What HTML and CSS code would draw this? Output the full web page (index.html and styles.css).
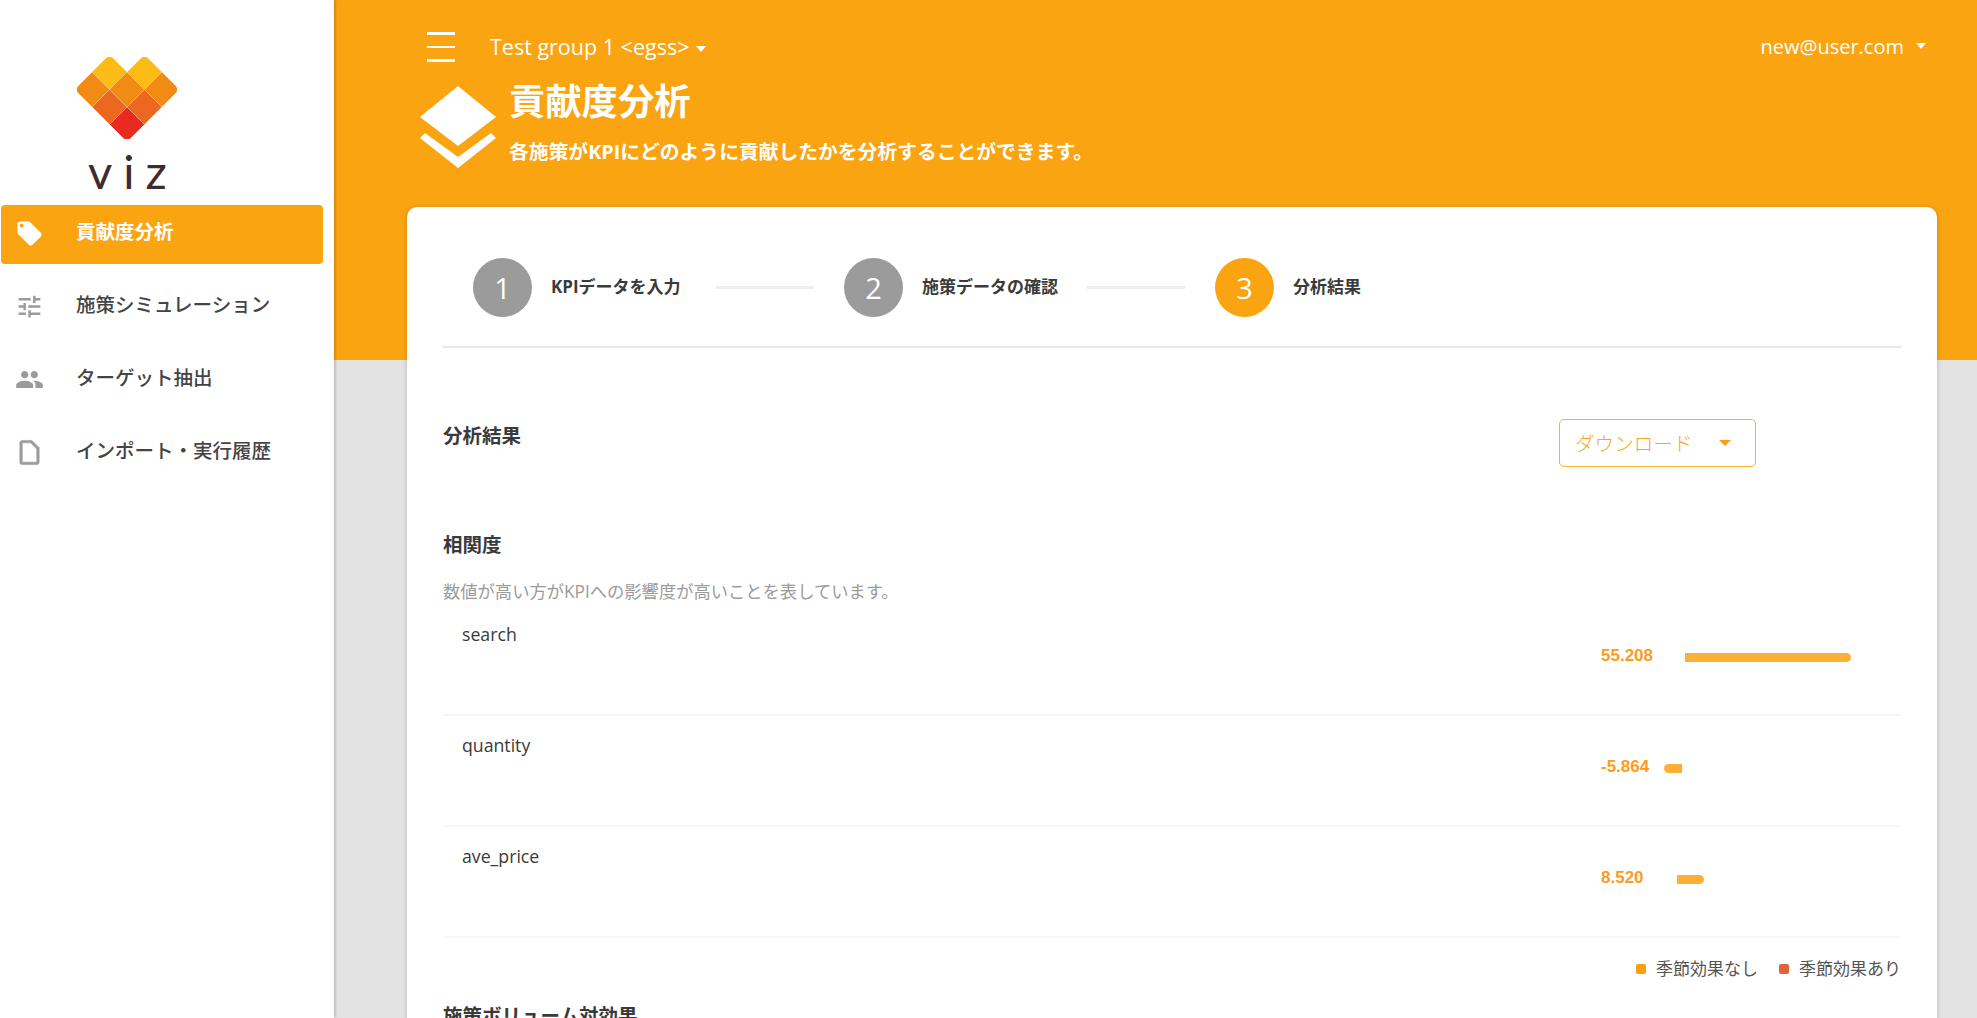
FILE: index.html
```html
<!DOCTYPE html>
<html lang="ja">
<head>
<meta charset="UTF-8">
<title>貢献度分析</title>
<link rel="stylesheet" href="styles.css">
</head>
<body>
<div class="app">
  <aside class="sidebar">
    <div class="logo">
      <svg class="logo-mark" width="100" height="82" viewBox="0 0 100 82">
        <defs>
          <clipPath id="heart">
            <path d="M28 2Q32.5-2.500 37 2L50 15 63 2Q67.500-2.500 72 2L98 28Q102.500 32.500 98 37L54.500 80.500Q50 85 45.500 80.500L2 37Q-2.500 32.500 2 28Z"/>
          </clipPath>
        </defs>
        <g clip-path="url(#heart)" stroke="#fbd98a" stroke-width=".4">
          <path fill="#fcbb15" d="M32.500-2.500 50 15 32.500 32.500 15 15Z"/>
          <path fill="#fcbb15" d="M67.500-2.500 85 15 67.500 32.500 50 15Z"/>
          <path fill="#f28b14" d="M15 15 32.500 32.500 15 50-2.500 32.500Z"/>
          <path fill="#f28b14" d="M50 15 67.500 32.500 50 50 32.500 32.500Z"/>
          <path fill="#f28b14" d="M85 15 102.500 32.500 85 50 67.500 32.500Z"/>
          <path fill="#ec6720" d="M32.500 32.500 50 50 32.500 67.500 15 50Z"/>
          <path fill="#ec6720" d="M67.500 32.500 85 50 67.500 67.500 50 50Z"/>
          <path fill="#e92a20" d="M50 50 67.500 67.500 50 85 32.500 67.500Z"/>
        </g>
      </svg>
      <div class="logo-text">viz</div>
    </div>
    <nav class="nav">
      <a class="nav-item active">
        <svg class="nav-icon" viewBox="0 0 24 24"><path d="M21.410 11.580l-9-9C12.050 2.220 11.550 2 11 2H4c-1.100 0-2 .9-2 2v7c0 .55.22 1.050.59 1.420l9 9c.36.36.86.58 1.410.58.55 0 1.050-.22 1.410-.59l7-7c.37-.36.59-.86.59-1.410 0-.55-.23-1.060-.59-1.420zM5.500 7C4.670 7 4 6.330 4 5.500S4.670 4 5.500 4 7 4.670 7 5.500 6.330 7 5.500 7z"/></svg>
        <span>貢献度分析</span>
      </a>
      <a class="nav-item">
        <svg class="nav-icon" viewBox="0 0 24 24"><path d="M3 17v2h6v-2H3zM3 5v2h10V5H3zm10 16v-2h8v-2h-8v-2h-2v6h2zM7 9v2H3v2h4v2h2V9H7zm14 4v-2H11v2h10zm-6-4h2V7h4V5h-4V3h-2v6z"/></svg>
        <span>施策シミュレーション</span>
      </a>
      <a class="nav-item">
        <svg class="nav-icon" viewBox="0 0 24 24"><path d="M16 11c1.660 0 2.990-1.340 2.990-3S17.660 5 16 5c-1.660 0-3 1.340-3 3s1.340 3 3 3zm-8 0c1.660 0 2.990-1.340 2.990-3S9.660 5 8 5C6.340 5 5 6.340 5 8s1.340 3 3 3zm0 2c-2.330 0-7 1.170-7 3.500V19h14v-2.500c0-2.330-4.670-3.500-7-3.500zm8 0c-.29 0-.62.02-.97.05 1.160.84 1.970 1.970 1.970 3.450V19h6v-2.500c0-2.330-4.670-3.500-7-3.500z"/></svg>
        <span>ターゲット抽出</span>
      </a>
      <a class="nav-item">
        <svg class="nav-icon file" viewBox="0 0 24 24"><path d="M14 2H6c-1.100 0-2 .9-2 2v16c0 1.100.9 2 2 2h12c1.100 0 2-.9 2-2V8l-6-6zm4 18H6V4h7l5 5v11z"/></svg>
        <span>インポート・実行履歴</span>
      </a>
    </nav>
  </aside>

  <main class="main">
    <header class="header">
      <div class="topbar">
        <div class="burger"><i></i><i></i><i></i></div>
        <div class="group">Test group 1 &lt;egss&gt;<b class="caret"></b></div>
        <div class="user">new@user.com<b class="caret"></b></div>
      </div>
      <div class="page-head">
        <svg class="layers" width="76" height="82" viewBox="0 0 76 82">
          <path fill="#fff" d="M38 0 76 31 38 60 0 31Z"/>
          <path fill="#fff" d="M5 47 38 71 71 47 76 52 38 82 0 52Z"/>
        </svg>
        <div>
          <h1 class="page-title">貢献度分析</h1>
          <p class="page-sub">各施策がKPIにどのように貢献したかを分析することができます。</p>
        </div>
      </div>
    </header>

    <section class="card">
      <div class="steps">
        <div class="step"><span class="step-num">1</span><span class="step-label">KPIデータを入力</span></div>
        <div class="step-line"></div>
        <div class="step"><span class="step-num">2</span><span class="step-label">施策データの確認</span></div>
        <div class="step-line"></div>
        <div class="step"><span class="step-num current">3</span><span class="step-label">分析結果</span></div>
      </div>

      <div class="result-head">
        <h2 class="heading">分析結果</h2>
        <button class="download"><span>ダウンロード</span><b class="caret"></b></button>
      </div>

      <h3 class="heading">相関度</h3>
      <p class="desc">数値が高い方がKPIへの影響度が高いことを表しています。</p>

      <div class="row">
        <div class="row-label">search</div>
        <div class="row-value">55.208</div>
        <div class="bar right" style="margin-left: 24px; width: 166px;"></div>
      </div>
      <div class="row">
        <div class="row-label">quantity</div>
        <div class="row-value">-5.864</div>
        <div class="bar left" style="margin-left: 3px; width: 18px;"></div>
      </div>
      <div class="row">
        <div class="row-label">ave_price</div>
        <div class="row-value">8.520</div>
        <div class="bar right" style="margin-left: 16px; width: 27px;"></div>
      </div>

      <div class="legend">
        <span class="legend-item"><i class="dot orange"></i>季節効果なし</span>
        <span class="legend-item"><i class="dot red"></i>季節効果あり</span>
      </div>

      <h3 class="heading">施策ボリューム対効果</h3>
    </section>
  </main>
</div>
</body>
</html>
```

FILE: styles.css
```css
* { box-sizing: border-box; }
html, body { height: 100%; }
body { margin: 0; overflow: hidden; background: #e3e3e3; color: #3a3a3a; font-family: "Open Sans", "Noto Sans CJK JP", sans-serif; font-size: 17px; }
.app { display: flex; height: 100%; }

.sidebar { flex: 0 0 334px; background: #fff; padding-left: 1px; box-shadow: 1px 0 3px rgba(0,0,0,0.25); position: relative; z-index: 1; }
.logo { height: 205px; padding: 57px 0 0 76px; }
.logo-mark { display: block; }
.logo-text { font-family: Lato, sans-serif; font-size: 47px; line-height: 47px; letter-spacing: 11px; color: #3d2b2f; margin: 9px 0 0 11px; }
.nav { width: 322px; }
.nav-item { display: flex; align-items: center; height: 59px; margin-bottom: 14px; padding-left: 14px; border-radius: 4px; font-size: 19.500px; font-weight: 500; color: #444; }
.nav-item span { padding-bottom: 8px; }
.nav-item.active { background: #faa412; color: #fff; font-weight: 700; }
.nav-icon { width: 29px; height: 29px; margin: 0 32px 2px 0; fill: #9b9b9b; flex: none; }
.nav-icon.file { stroke: #9b9b9b; stroke-width: .5; }
.nav-item.active .nav-icon { fill: #fff; }

.main { flex: 1; min-width: 0; height: 100%; overflow: hidden; }
.header { height: 360px; background: #faa412; color: #fff; padding: 0 51px 0 86px; }
.topbar { display: flex; align-items: center; height: 94px; margin-bottom: -8px; font-size: 20px; }
.burger { width: 28px; margin: 0 35px 0 7px; display: flex; flex-direction: column; gap: 11px; }
.burger i { display: block; height: 2.500px; background: #fff; }
.group { flex: 1; font-size: 21.500px; padding-bottom: 2px; }
.user { display: flex; align-items: center; padding-bottom: 2px; }
.caret { display: inline-block; width: 0; height: 0; border: 5.500px solid transparent; border-bottom: 0; border-top: 6px solid currentColor; vertical-align: 3px; margin-left: 7px; }
.user .caret { margin-left: 12px; }

.page-head { display: flex; gap: 13px; }
.layers { flex: none; }
.page-title { margin: -8px 0 0; font-size: 36.300px; line-height: 46px; font-weight: 700; }
.page-sub { margin: 14px 0 0; font-size: 19.800px; line-height: 28px; font-weight: 700; }

.card { height: 900px; margin: -153px 40px 0 73px; background: #fff; border-radius: 10px; padding: 0 36px; box-shadow: 0 1px 5px rgba(0,0,0,0.2); }
.steps { display: flex; align-items: center; height: 141px; padding: 21px 0 0 30px; border-bottom: 2px solid #e8e8e8; }
.step { display: flex; align-items: center; gap: 19px; }
.step-num { display: flex; align-items: center; justify-content: center; width: 59px; height: 59px; border-radius: 50%; background: #9b9b9b; color: #fff; font-size: 29px; }
.step-num.current { background: #faa412; }
.step-label { width: 135px; padding-bottom: 4px; font-size: 17px; font-weight: 700; color: #3a3a3a; white-space: nowrap; }
.step-line { width: 98px; height: 3px; margin: 0 30px; background: #eee; }

.heading { margin: 0; font-size: 19.500px; line-height: 28px; font-weight: 700; color: #3a3a3a; }
.result-head { display: flex; justify-content: space-between; align-items: flex-start; padding: 71px 145px 0 0; height: 183px; }
.result-head .heading { margin-top: 3px; }
.download { display: flex; align-items: center; justify-content: space-between; width: 197px; height: 48px; padding: 0 24px 0 15px; background: #fff; border: 1px solid #fdb034; border-radius: 5px; color: #fba31f; font-family: inherit; font-size: 19.600px; font-weight: 300; }
.download span { padding-bottom: 2px; }
.download .caret { border-width: 6px; border-bottom: 0; color: #fa9f12; }

.desc { margin: 19px 0 0; height: 27px; line-height: 27px; color: #9b9b9b; font-size: 17.300px; }

.row { display: flex; height: 111px; padding-left: 19px; border-bottom: 2px solid #f6f6f6; }
.row-label { flex: 0 0 1139px; font-size: 17.700px; line-height: 24px; padding-top: 17px; }
.row-value { flex: 0 0 60px; font-family: "Liberation Sans", sans-serif; font-weight: 700; color: #ff9b1a; padding-top: 41px; line-height: 20px; }
.bar { height: 9px; margin-top: 48px; background: #fdb034; }
.bar.right { border-radius: 0 5px 5px 0; }
.bar.left { border-radius: 5px 0 0 5px; }

.legend { display: flex; justify-content: flex-end; gap: 21px; height: 64px; padding-top: 18px; color: #555; line-height: 26px; }
.legend-item { display: flex; align-items: center; height: 26px; }
.dot { width: 10px; height: 10px; border-radius: 2px; margin-right: 10px; }
.dot.orange { background: #fa9f12; }
.dot.red { background: #e0633a; }
```
